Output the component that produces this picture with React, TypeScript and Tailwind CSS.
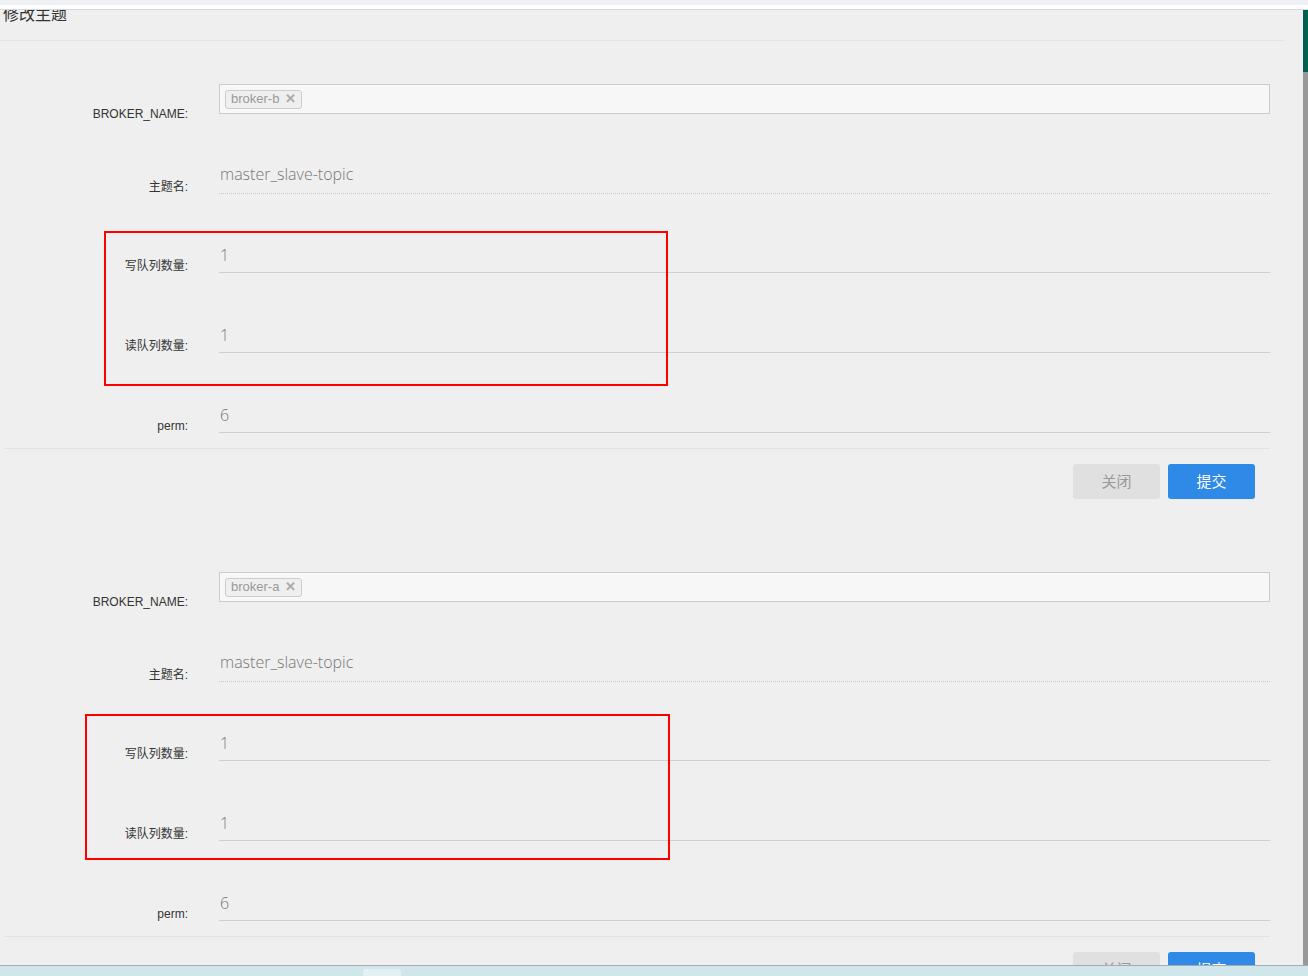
import { ReactNode } from "react";

const cjk = "font-['Noto_Sans_CJK_SC','Noto_Sans',sans-serif]";
const labelFont = "font-['Liberation_Sans','Noto_Sans_CJK_SC',sans-serif]";

function Row({
  label,
  height,
  children,
}: {
  label: string;
  height: string;
  children: ReactNode;
}) {
  return (
    <div className={`flex items-end ${height}`}>
      <div
        className={`w-[188px] shrink-0 text-right text-[12px] leading-[14px] text-[#333] ${labelFont}`}
      >
        {label}
      </div>
      <div className="ml-[31px] flex-1">{children}</div>
    </div>
  );
}

function Field({ value, dotted }: { value: string; dotted?: boolean }) {
  return (
    <div
      className={`flex items-center pl-px font-['Open_Sans',sans-serif] text-[16px] font-light text-[#777] ${
        dotted
          ? "h-[36px] pb-[4px] border-b border-dotted border-[#c8c8c8]"
          : "h-[34px] pb-[2px] border-b border-[#cfcfcf]"
      }`}
    >
      {value}
    </div>
  );
}

function TopicForm({ broker }: { broker: string }) {
  return (
    <div className="pb-[30px]">
      <div className="pr-[33px]">
        <div className="flex h-[80px] items-end">
          <div
            className={`w-[188px] shrink-0 text-right text-[12px] leading-[14px] text-[#333] ${labelFont}`}
          >
            BROKER_NAME:
          </div>
          <div className="mb-[7px] ml-[31px] flex h-[30px] flex-1 items-center border border-[#cccccc] bg-[#f7f7f7] pl-[5px]">
            <span className="flex h-[19px] items-center gap-[6px] rounded-[3px] border border-[#cccccc] bg-[#efefef] px-[5px] font-['Liberation_Sans',sans-serif] text-[13px] text-[#999]">
              {broker}
              <span className="text-[13px] font-bold text-[#aaa]">✕</span>
            </span>
          </div>
        </div>
        <Row label="主题名:" height="h-[73px]">
          <Field value="master_slave-topic" dotted />
        </Row>
        <Row label="写队列数量:" height="h-[79px]">
          <Field value="1" />
        </Row>
        <Row label="读队列数量:" height="h-[80px]">
          <Field value="1" />
        </Row>
        <Row label="perm:" height="h-[80px]">
          <Field value="6" />
        </Row>
      </div>
      <div className="ml-[5px] mr-[33px] mt-[15px] h-px bg-[#e2e2e2]" />
      <div className="mr-[48px] mt-[15px] flex justify-end gap-[8px]">
        <button
          type="button"
          className={`h-[35px] w-[87px] rounded-[3px] bg-[#e0e0e0] text-[15px] text-[#999] ${cjk}`}
        >
          关闭
        </button>
        <button
          type="button"
          className={`h-[35px] w-[87px] rounded-[3px] bg-[#2f89e7] text-[15px] text-white ${cjk}`}
        >
          提交
        </button>
      </div>
    </div>
  );
}

export default function App() {
  return (
    <div className="flex h-[976px] w-[1308px] flex-col overflow-hidden bg-[#efefef]">
      <div className="h-[5px] shrink-0 bg-[#f0f1f4]" />
      <div className="h-[4px] shrink-0 bg-white" />
      <div className="h-px shrink-0 bg-[#d8d8d8]" />
      <div className="flex min-h-0 flex-1">
        <div className="relative min-w-0 flex-1 overflow-hidden bg-[#efefef]">
          <div className="mr-[18px] h-[31px] overflow-hidden border-b border-[#e3e3e3]">
            <div
              className={`-mt-[8px] pl-[3px] text-[16px] leading-[22px] text-[#333] ${cjk}`}
            >
              修改主题
            </div>
          </div>
          <TopicForm broker="broker-b" />
          <TopicForm broker="broker-a" />

          <div className="pointer-events-none absolute left-[104px] top-[221px] h-[155px] w-[564px] border-2 border-[#f00]" />
          <div className="pointer-events-none absolute left-[85px] top-[704px] h-[146px] w-[585px] border-2 border-[#f00]" />
        </div>
        <div className="flex w-[5px] shrink-0 flex-col">
          <div className="h-[62px] bg-[#005f50]" />
          <div className="flex-1 bg-[#999]" />
        </div>
      </div>
      <div className="relative h-[11px] shrink-0 border-t border-[#aaa] bg-[#cfe6eb]">
        <div className="absolute left-[363px] top-[3px] h-[8px] w-[38px] rounded-t-[3px] bg-[#e4f1f4]" />
      </div>
    </div>
  );
}
